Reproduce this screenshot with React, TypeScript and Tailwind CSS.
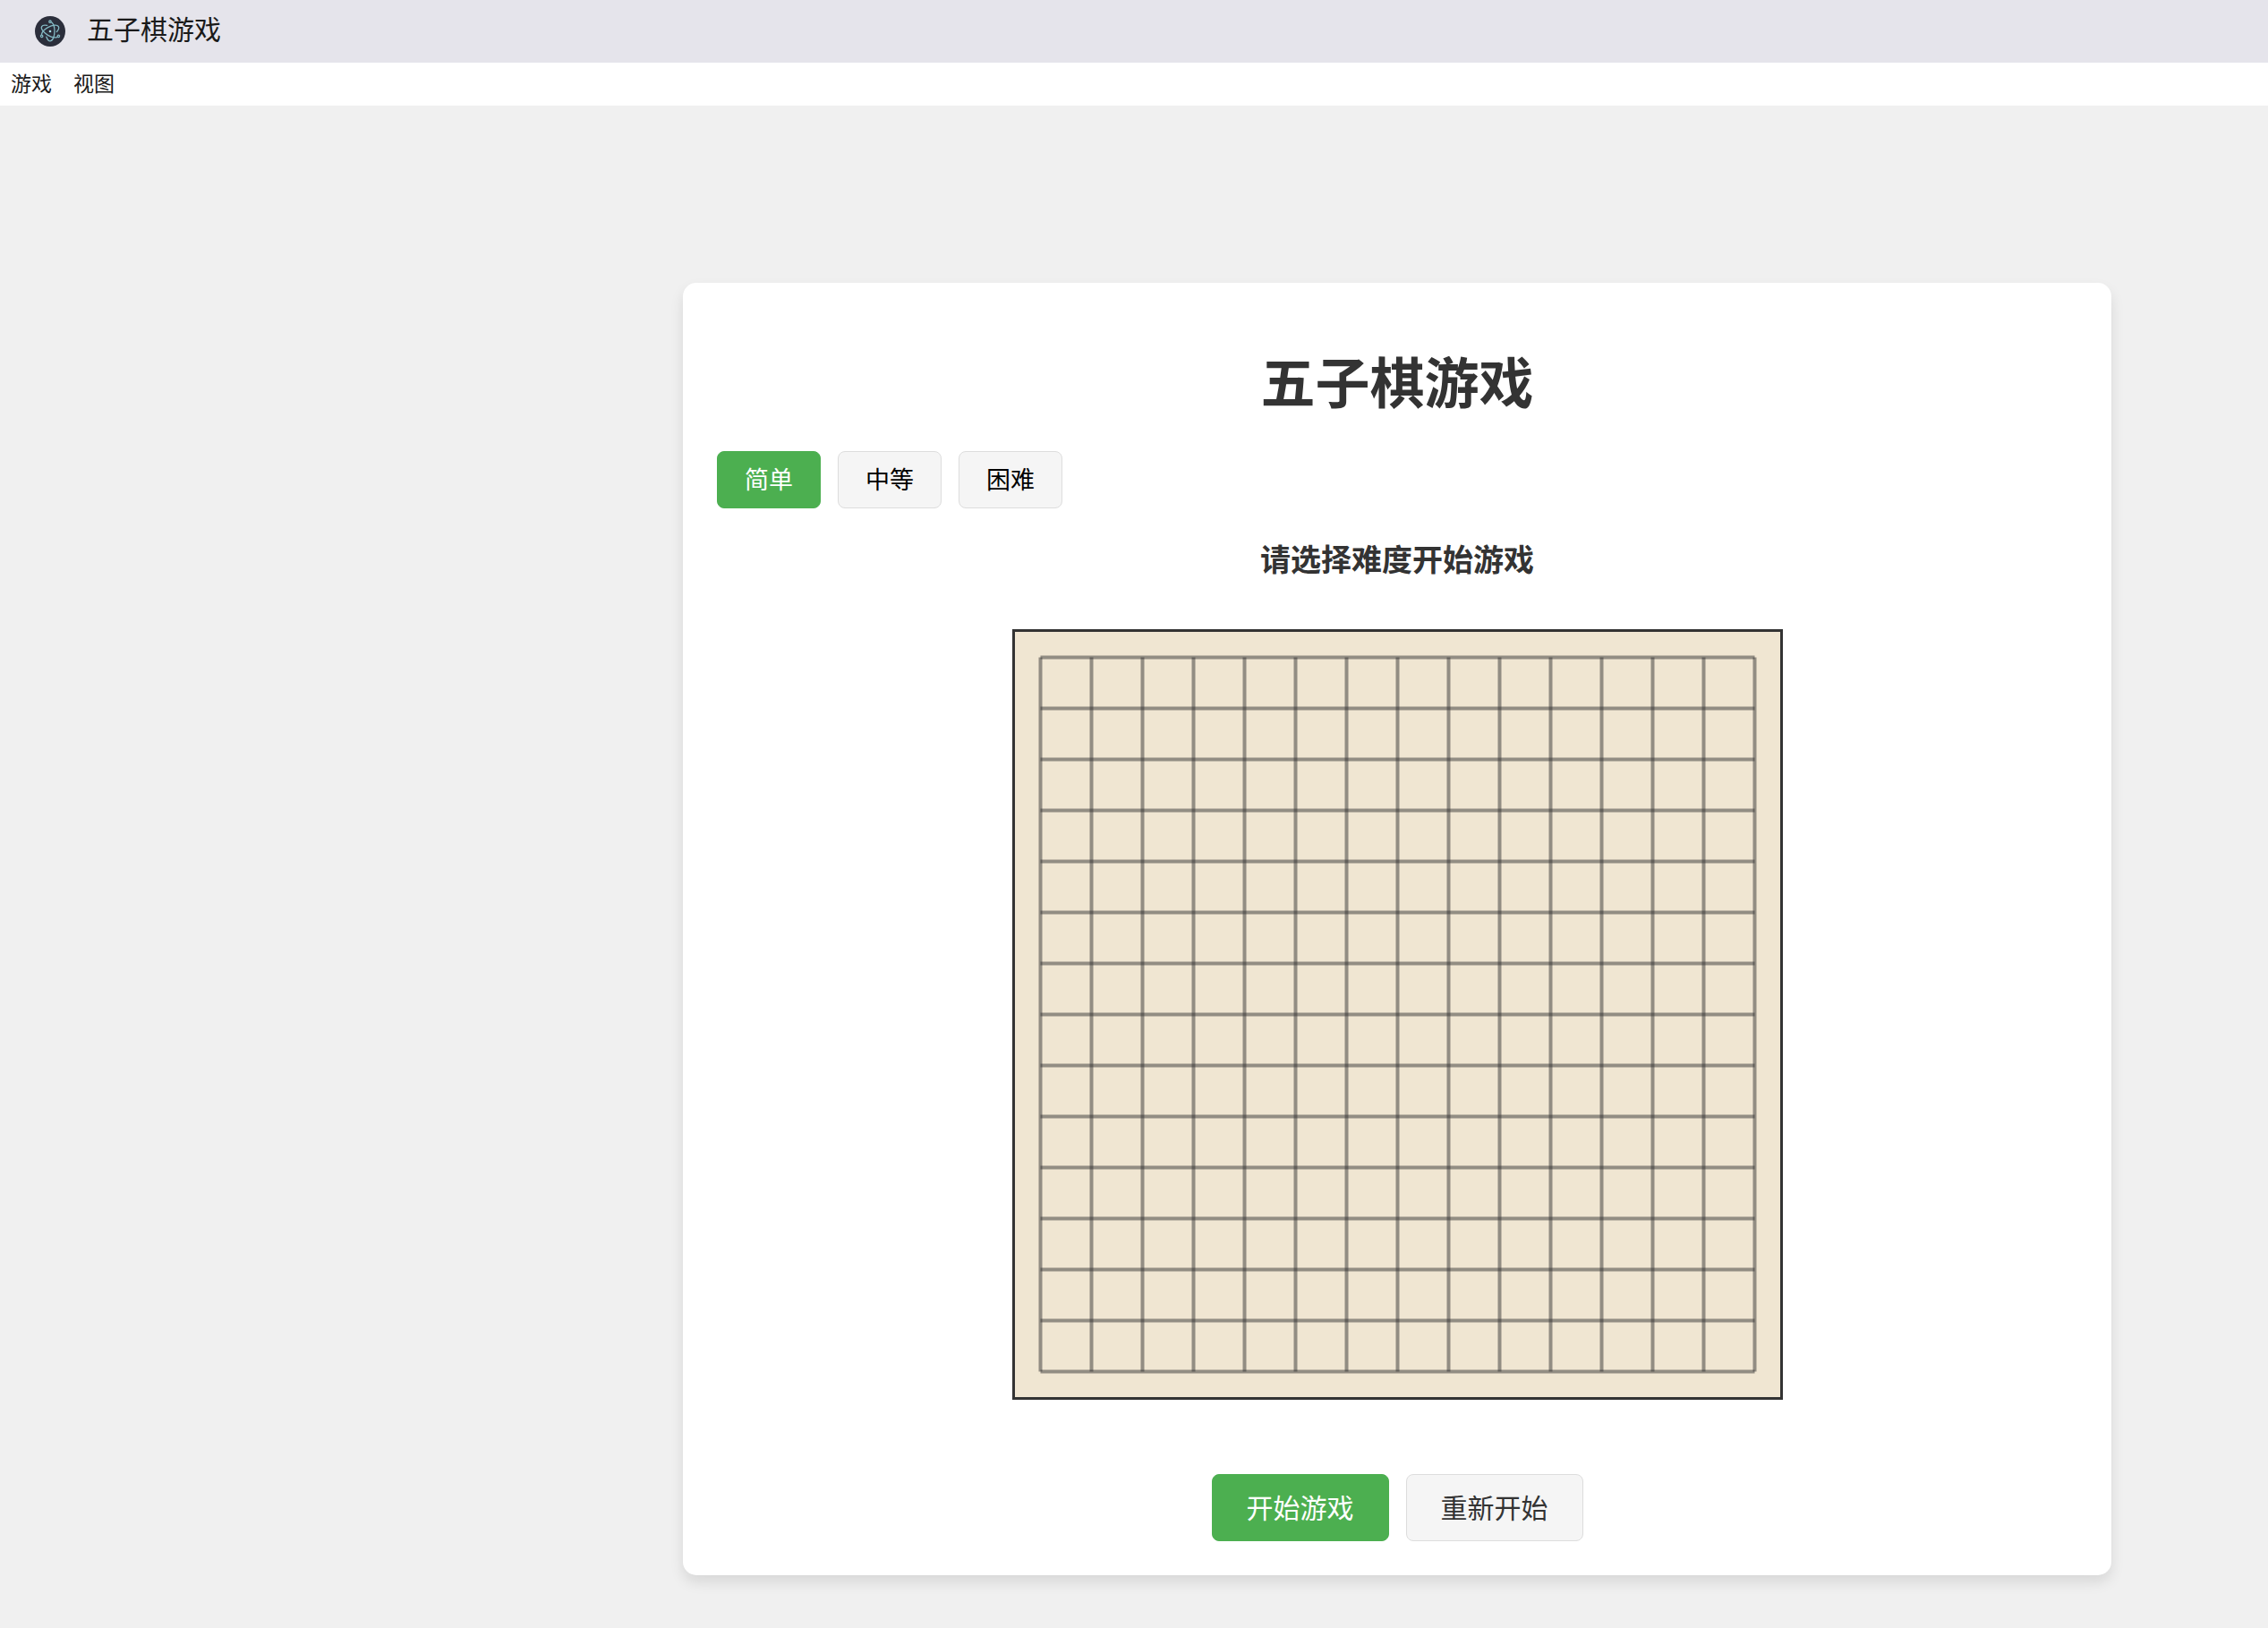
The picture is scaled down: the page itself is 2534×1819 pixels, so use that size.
import React, { useState } from 'react';

const CELL = 57;
const SIZE = 15;
const BOARD = CELL * SIZE;
const EDGE = CELL / 2;

const levels = ['简单', '中等', '困难'];
const menus = ['游戏', '视图'];

const AppIcon: React.FC = () => (
  <svg viewBox="0 0 34 34" className="size-[34px]" aria-hidden="true">
    <circle cx="17" cy="17" r="17" fill="#2b2e3b" />
    <g fill="none" stroke="#84b9c4" strokeWidth="1.3" strokeLinecap="round">
      {[0, 120, 240].map((angle) => (
        <g key={angle} transform={`rotate(${angle} 17 17)`}>
          <path d="M18.8 7A5 10.8 0 0 1 22 17A5 10.8 0 0 1 17 27.8A5 10.8 0 0 1 12.9 23.2" />
          <circle cx="17" cy="6.2" r="1.2" />
        </g>
      ))}
    </g>
    <circle cx="17" cy="17" r="1.3" fill="#a5dde6" />
  </svg>
);

const Board: React.FC = () => {
  const lines = Array.from({ length: SIZE }, (_, i) => EDGE + i * CELL);

  return (
    <div className="border-3 border-[#333333] bg-[#f0e6d2]">
      <svg width={BOARD} height={BOARD} className="block" stroke="#333333" strokeOpacity="0.5" strokeWidth="4">
        {lines.map((p) => (
          <g key={p}>
            <line x1={EDGE} y1={p} x2={BOARD - EDGE} y2={p} />
            <line x1={p} y1={EDGE} x2={p} y2={BOARD - EDGE} />
          </g>
        ))}
      </svg>
    </div>
  );
};

const App: React.FC = () => {
  const [level, setLevel] = useState('简单');

  return (
    <div className="flex min-h-screen flex-col bg-[#f0f0f0] font-['Noto_Sans','Noto_Sans_CJK_SC',sans-serif] text-[#333333]">
      <header className="flex h-[70px] items-center gap-6 bg-[#e5e4eb] pl-[39px]">
        <AppIcon />
        <span className="pb-1 text-[30px] leading-10 text-[#1a1a1a]">五子棋游戏</span>
      </header>

      <nav className="flex h-12 items-center gap-6 bg-white pb-0.5 pl-3">
        {menus.map((m) => (
          <button key={m} className="text-[23px] leading-8 text-[#1a1a1a]">
            {m}
          </button>
        ))}
      </nav>

      <main className="flex justify-end pt-[198px] pr-[175px] pb-[59px]">
        <section className="w-full max-w-[1596px] rounded-[15px] bg-white p-[38px] shadow-[0_8px_15px_rgba(0,0,0,0.1)]">
          <h1 className="pt-[30px] text-center text-[61px] leading-[88px] font-bold">五子棋游戏</h1>

          <div className="mt-8 flex gap-[19px]">
            {levels.map((l) => (
              <button
                key={l}
                onClick={() => setLevel(l)}
                className={
                  l === level
                    ? 'h-16 rounded-lg border border-[#4caf50] bg-[#4caf50] px-[30px] text-[27px] text-white'
                    : 'h-16 rounded-lg border border-[#dddddd] bg-[#f5f5f5] px-[30px] text-[27px] text-black'
                }
              >
                {l}
              </button>
            ))}
          </div>

          <p className="mt-8 text-center text-[34px] leading-[50px] font-bold">请选择难度开始游戏</p>

          <div className="mt-[53px] flex justify-center">
            <Board />
          </div>

          <div className="mt-[83px] flex justify-center gap-[19px]">
            <button className="h-[75px] rounded-lg border border-[#4caf50] bg-[#4caf50] px-[38px] text-[30px] text-white">
              开始游戏
            </button>
            <button className="h-[75px] rounded-lg border border-[#dddddd] bg-[#f5f5f5] px-[38px] text-[30px]">
              重新开始
            </button>
          </div>
        </section>
      </main>
    </div>
  );
};

export default App;
